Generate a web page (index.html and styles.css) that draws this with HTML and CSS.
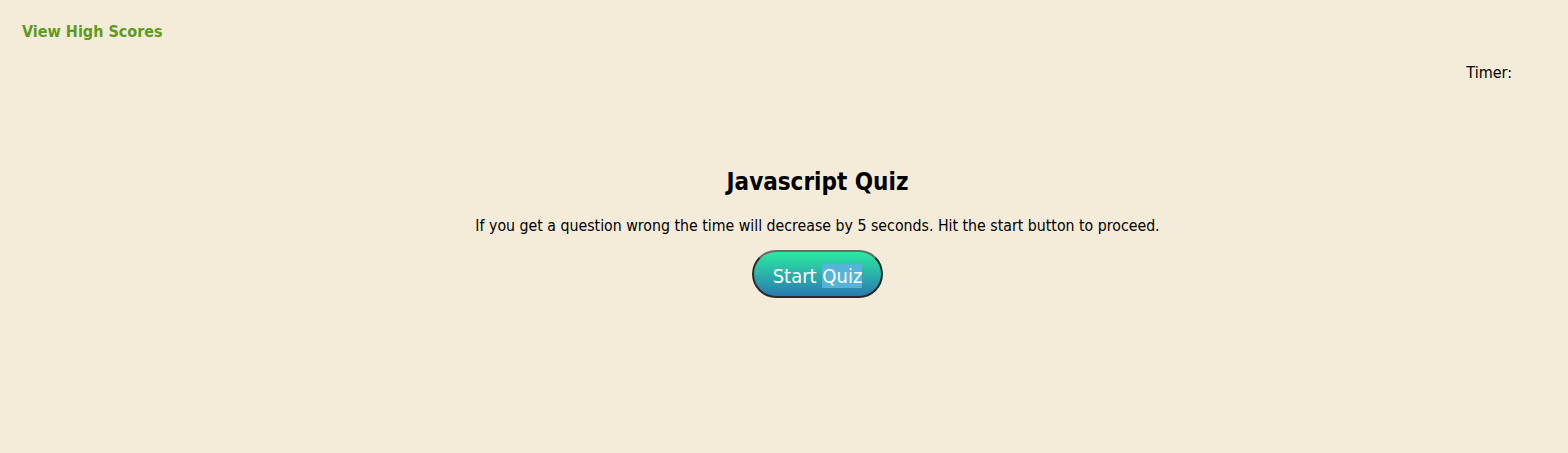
FILE: index.html
```html
<!DOCTYPE html>
<html>
<head>
<meta charset="utf-8">
<link rel="stylesheet" href="styles.css">
</head>
<body>
<header class="top">
  <a class="scores" href="#">View High Scores</a>
  <div class="timer">Timer: <span class="time"></span></div>
</header>
<main class="intro">
  <h1 class="title">Javascript Quiz</h1>
  <p class="desc">If you get a question wrong the time will decrease by 5 seconds. Hit the start button to proceed.</p>
  <button class="start">Start <span class="sel">Quiz</span></button>
</main>
</body>
</html>
```
FILE: styles.css
```css
html, body {
  margin: 0;
  padding: 0;
  background: #f4ebd9;
  height: 100%;
}
body {
  font-family: "DejaVu Sans Condensed", "DejaVu Sans", sans-serif;
  color: #000;
}
.top {
  display: flex;
  flex-direction: column;
  padding: 22px 56px 0 22px;
}
.scores {
  color: #5e9a20;
  font-weight: bold;
  font-size: 16px;
  text-decoration: none;
  line-height: 20px;
  align-self: flex-start;
}
.timer {
  align-self: flex-end;
  font-size: 16px;
  line-height: 20px;
  margin-top: 21px;
}
.intro {
  display: flex;
  flex-direction: column;
  align-items: center;
  margin-top: 84px;
  padding-left: 67px;
}
.title {
  font-size: 24px;
  line-height: 30px;
  margin: 0;
  font-weight: bold;
}
.desc {
  font-size: 15.75px;
  line-height: 20px;
  margin: 19px 0 14px;
}
.start {
  font-family: inherit;
  width: 131px;
  height: 48px;
  border-radius: 24px;
  border: 2px solid #2a2a2a;
  border-top-color: #6b6b6b;
  background: linear-gradient(#2ceaa0, #2a7ab2);
  color: #fff;
  font-size: 20px;
  padding: 3px 0 0;
}
.sel {
  background: #55b4d8;
}
```
